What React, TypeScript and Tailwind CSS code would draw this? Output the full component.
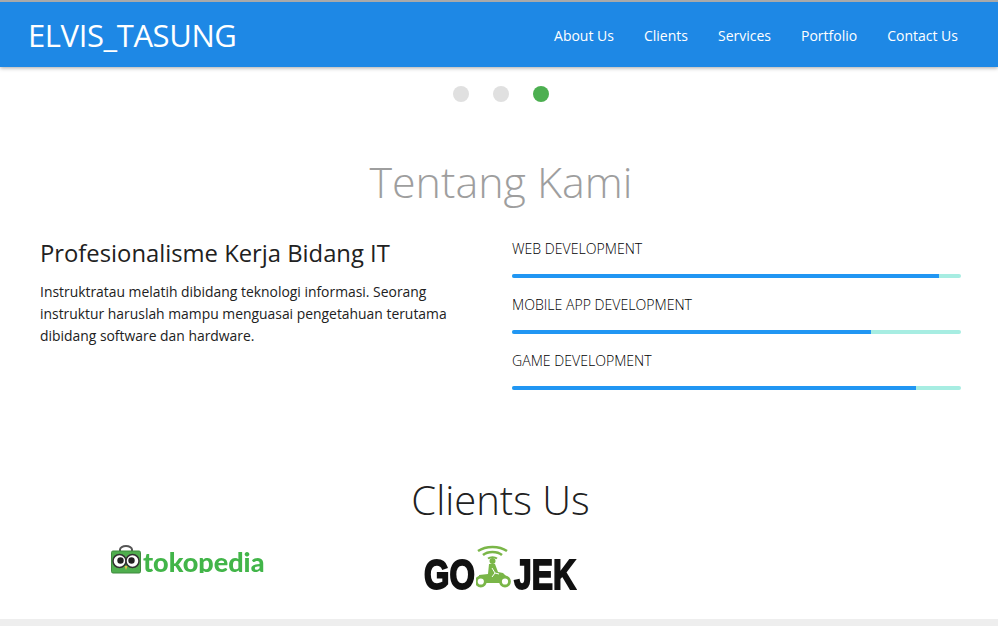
const navItems = ['About Us', 'Clients', 'Services', 'Portfolio', 'Contact Us'];

const skills = [
  { name: 'WEB DEVELOPMENT', width: 'w-[95%]' },
  { name: 'MOBILE APP DEVELOPMENT', width: 'w-[80%]' },
  { name: 'GAME DEVELOPMENT', width: 'w-[90%]' },
];

const TokopediaLogo = () => (
  <div className="flex h-[29px] w-[153px] items-start blur-[0.6px]">
    <svg width="30" height="29" viewBox="0 0 30 29" className="shrink-0">
      <path d="M9 7 V4.5 a6 3.5 0 0 1 12 0 V7" fill="none" stroke="#555" strokeWidth="2" />
      <rect x="0.5" y="6" width="29" height="22" rx="1.5" fill="#4fae4e" stroke="#3f8a3f" />
      <circle cx="8.5" cy="16" r="6.5" fill="#fff" stroke="#333" strokeWidth="1.5" />
      <circle cx="21.5" cy="16" r="6.5" fill="#fff" stroke="#333" strokeWidth="1.5" />
      <circle cx="9.5" cy="15.5" r="3.2" fill="#222" />
      <circle cx="20.5" cy="15.5" r="3.2" fill="#222" />
      <path d="M13.5 21 h3 l-1.5 4 z" fill="#e9c24a" />
    </svg>
    <span className="mt-[3px] ml-[2px] block h-[25px] overflow-hidden font-['Lato',sans-serif] text-[27px] leading-[27px] font-black text-[#42b549]">
      tokopedia
    </span>
  </div>
);

const GojekLogo = () => (
  <div className="flex h-[49px] w-[152px] items-start blur-[0.5px]">
    <span className="mt-[13px] block h-[36px] w-[52px] origin-left scale-x-[0.76] font-['Liberation_Sans',sans-serif] text-[43px] leading-[36px] font-bold text-[#111] [-webkit-text-stroke:2px_#111]">
      GO
    </span>
    <svg width="36" height="46" viewBox="0 0 36 46" className="shrink-0">
      <path d="M2 8 a20 13 0 0 1 29 0" fill="none" stroke="#7ab648" strokeWidth="2.5" />
      <path d="M7 12 a12 8 0 0 1 19 0" fill="none" stroke="#7ab648" strokeWidth="2.5" />
      <path d="M12 15.5 a6 4 0 0 1 9 0" fill="none" stroke="#7ab648" strokeWidth="2" />
      <circle cx="16.5" cy="18" r="3" fill="#7ab648" />
      <path d="M13 21 h6 l3 8 l5 1 l4 4 l-5 6 h-16 l-7 -5 l0 -3 l9 -1 z" fill="#7ab648" />
      <path d="M16 25 l3 5 l4 1 M19 30 l-3 4" fill="none" stroke="#fff" strokeWidth="1" />
      <circle cx="4.8" cy="38.5" r="4.5" fill="#fff" stroke="#7ab648" strokeWidth="2.8" />
      <circle cx="29" cy="38.5" r="4.5" fill="#fff" stroke="#7ab648" strokeWidth="2.8" />
    </svg>
    <span className="mt-[13px] ml-[2px] block h-[36px] w-[62px] origin-left scale-x-[0.74] font-['Liberation_Sans',sans-serif] text-[43px] leading-[36px] font-bold whitespace-nowrap text-[#111] [-webkit-text-stroke:2px_#111]">
      JEK
    </span>
  </div>
);

export default function App() {
  return (
    <div className="flex h-[626px] flex-col overflow-hidden bg-white font-['Open_Sans',sans-serif] font-light text-[#212121]">
      <header className="flex h-[67px] shrink-0 items-center justify-between border-t-[2px] border-[#a9a9a9] bg-[#1e88e5] pr-10 pl-[28px] shadow-[0_1px_4px_rgba(0,0,0,0.35)]">
        <a className="pt-[2px] text-[31px] leading-none font-normal tracking-[-0.4px] text-white">ELVIS_TASUNG</a>
        <nav className="flex gap-[30px] pt-[2px]">
          {navItems.map((item) => (
            <a key={item} className="text-sm font-normal text-white">
              {item}
            </a>
          ))}
        </nav>
      </header>

      <div className="flex justify-center gap-6 pt-[19px] pl-1">
        <span className="size-4 rounded-full bg-[#e0e0e0]" />
        <span className="size-4 rounded-full bg-[#e0e0e0]" />
        <span className="size-4 rounded-full bg-[#4caf50]" />
      </div>

      <h1 className="mt-[50px] pl-1 text-center text-[43px] leading-[60px] font-light text-[#9e9e9e]">Tentang Kami</h1>

      <section className="mt-[18px] flex pr-[37px] pl-10">
        <div className="w-[472px] pr-6">
          <h2 className="mt-[7px] text-[23.8px] leading-8 font-normal text-[#212121]">Profesionalisme Kerja Bidang IT</h2>
          <p className="mt-[12px] text-[13.9px] leading-[22px] font-normal">
            Instruktratau melatih dibidang teknologi informasi. Seorang instruktur haruslah mampu menguasai pengetahuan
            terutama dibidang software dan hardware.
          </p>
        </div>
        <div className="flex-1 pt-[6px]">
          {skills.map((skill) => (
            <div key={skill.name} className="h-14">
              <div className="pt-px text-[14.1px] leading-6 font-light text-black">{skill.name}</div>
              <div className="mt-[13px] h-1 overflow-hidden rounded-sm bg-[#a7ede2]">
                <div className={`h-full bg-[#2196f3] ${skill.width}`} />
              </div>
            </div>
          ))}
        </div>
      </section>

      <h2 className="mt-[70px] pl-[3px] text-center text-[40px] leading-[52px] font-light text-[#212121]">Clients Us</h2>

      <div className="flex flex-1 items-start gap-[160px] pl-[111px]">
        <div className="pt-[19px]">
          <TokopediaLogo />
        </div>
        <div className="pt-[17px]">
          <GojekLogo />
        </div>
      </div>

      <div className="h-[7px] shrink-0 bg-[#eeeeee]" />
    </div>
  );
}
